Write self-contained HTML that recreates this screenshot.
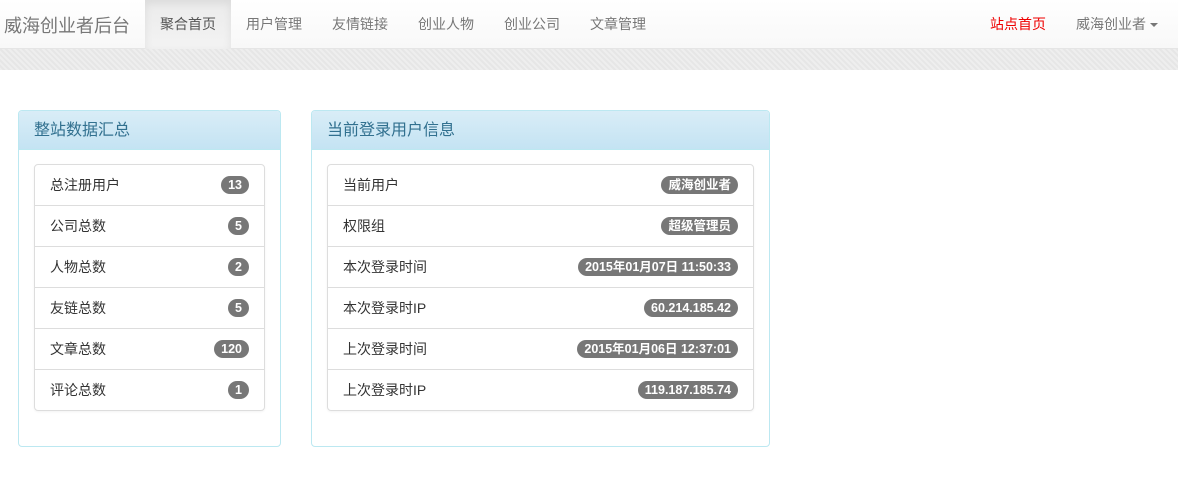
<!DOCTYPE html>
<html><head><meta charset="utf-8"><style>
*{box-sizing:border-box;margin:0;padding:0}
body{width:1178px;height:484px;background:#fff;font-family:"Liberation Sans","Noto Sans CJK SC",sans-serif;font-size:14px;color:#333;overflow:hidden;position:relative}
.nav{position:absolute;left:0;top:0;width:1178px;height:49px;background:linear-gradient(#fff,#f8f8f8);border-bottom:1px solid #e5e5e5;box-shadow:0 1px 4px rgba(0,0,0,.08)}
.brand{position:absolute;left:4px;top:12px;font-size:18px;color:#777}
.nav a{position:absolute;top:0;height:49px;line-height:48px;color:#777;font-size:14px;text-decoration:none}
.act{background:linear-gradient(#ebebeb,#f3f3f3);box-shadow:inset 0 3px 9px rgba(0,0,0,.075);color:#555!important}
.strip{position:absolute;top:49px;left:0;width:1178px;height:21px;background:repeating-linear-gradient(45deg,#eee 0 2px,#e6e6e6 2px 4px)}
.panel{position:absolute;top:110px;border:1px solid #bce8f1;border-radius:4px;background:#fff}
.ph{height:39px;background:linear-gradient(#d9edf7,#c4e3f3);border-bottom:1px solid #bce8f1;color:#31708f;font-size:16px;line-height:39px;padding-left:15px;border-radius:3px 3px 0 0}
.lg{position:absolute;top:53px;left:15px;right:15px;border:1px solid #ddd;border-radius:4px;box-shadow:0 1px 2px rgba(0,0,0,.05)}
.li{height:41px;border-top:1px solid #ddd;line-height:40px;padding-left:15px;position:relative}
.li:first-child{border-top:none;height:40px}
.b{position:absolute;right:15px;top:11px;height:18px;line-height:18px;padding:0 7px;background:#777;color:#fff;font-weight:bold;font-size:12.5px;border-radius:10px}
.li:first-child .b{top:11px}
.caret{display:inline-block;width:0;height:0;border-top:4px solid #777;border-left:4px solid transparent;border-right:4px solid transparent;vertical-align:middle;margin-left:4px}
</style></head><body>
<div class="nav">
<div class="brand">威海创业者后台</div>
<a class="act" style="left:145px;width:86px;text-align:center">聚合首页</a>
<a style="left:246px">用户管理</a>
<a style="left:332px">友情链接</a>
<a style="left:418px">创业人物</a>
<a style="left:504px">创业公司</a>
<a style="left:590px">文章管理</a>
<a style="left:990px;color:#e00">站点首页</a>
<a style="left:1076px">威海创业者<span class="caret"></span></a>
</div>
<div class="strip"></div>
<div class="panel" style="left:18px;width:263px;height:337px">
<div class="ph">整站数据汇总</div>
<div class="lg">
<div class="li">总注册用户<span class="b">13</span></div>
<div class="li">公司总数<span class="b">5</span></div>
<div class="li">人物总数<span class="b">2</span></div>
<div class="li">友链总数<span class="b">5</span></div>
<div class="li">文章总数<span class="b">120</span></div>
<div class="li">评论总数<span class="b">1</span></div>
</div></div>
<div class="panel" style="left:311px;width:459px;height:337px">
<div class="ph">当前登录用户信息</div>
<div class="lg">
<div class="li">当前用户<span class="b">威海创业者</span></div>
<div class="li">权限组<span class="b">超级管理员</span></div>
<div class="li">本次登录时间<span class="b">2015年01月07日 11:50:33</span></div>
<div class="li">本次登录时IP<span class="b">60.214.185.42</span></div>
<div class="li">上次登录时间<span class="b">2015年01月06日 12:37:01</span></div>
<div class="li">上次登录时IP<span class="b">119.187.185.74</span></div>
</div></div>
</body></html>
